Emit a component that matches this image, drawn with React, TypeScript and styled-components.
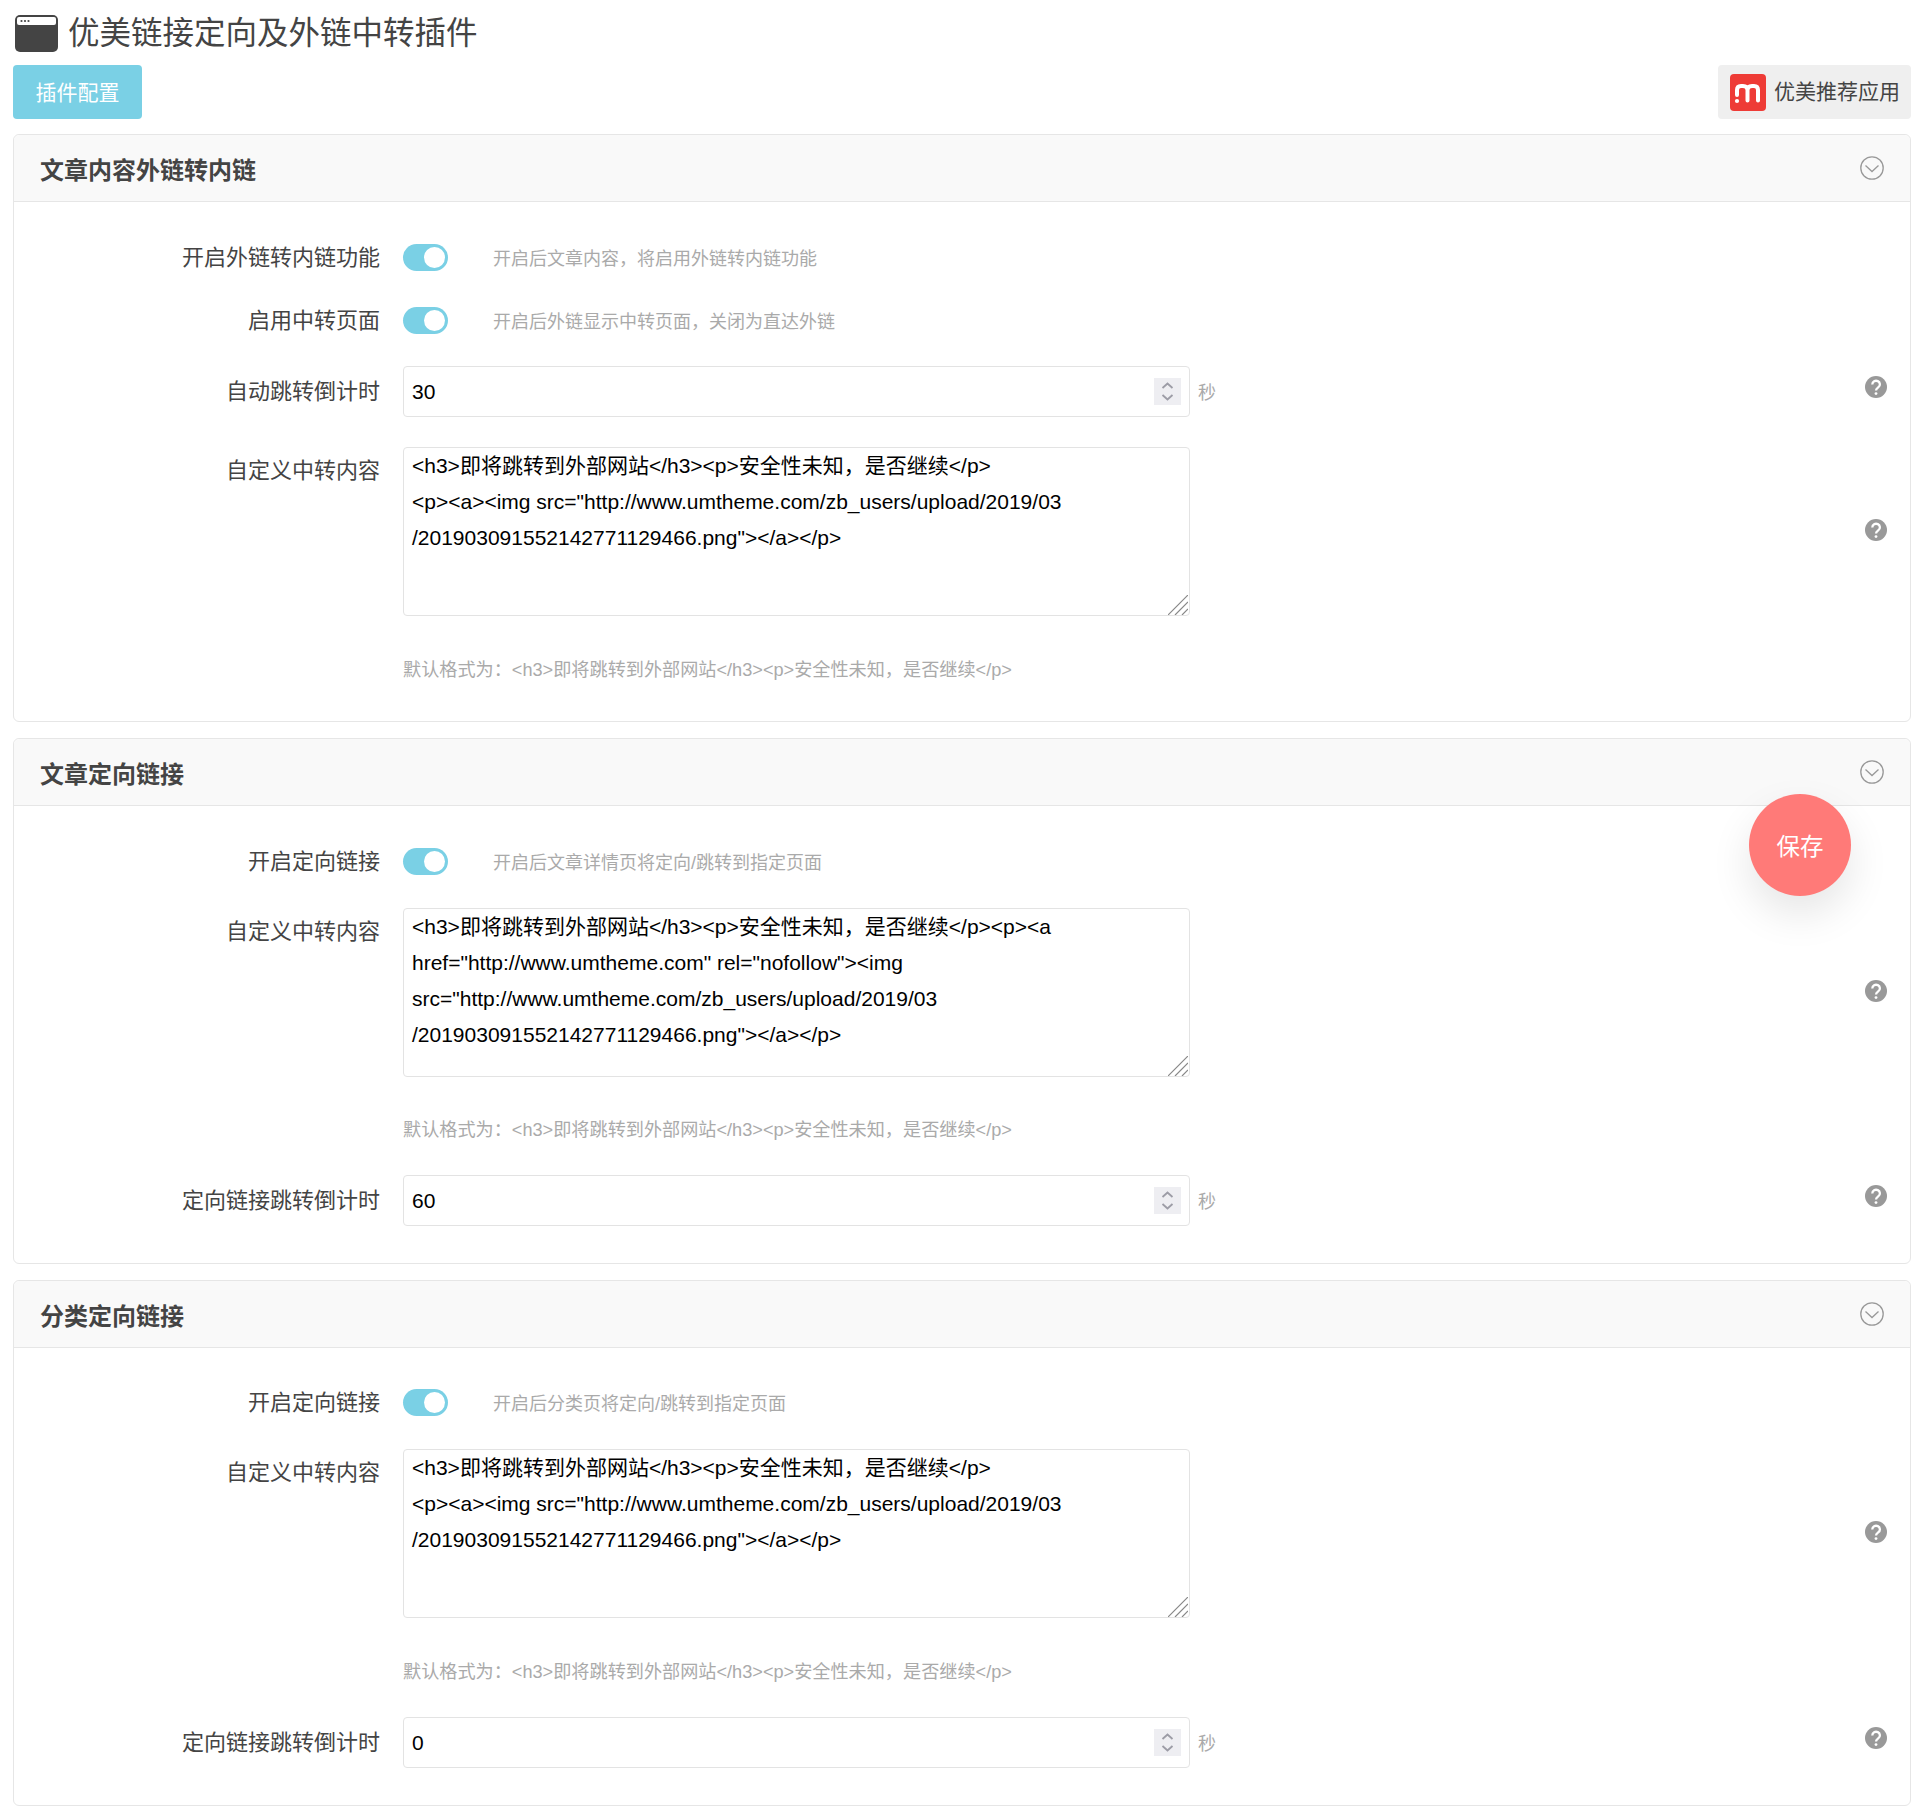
import React from 'react';
import styled, { createGlobalStyle } from 'styled-components';

const cjk = `"Liberation Sans", "Noto Sans CJK SC", sans-serif`;

const GlobalStyle = createGlobalStyle`
	html, body {
		margin: 0;
		padding: 0;
		background: #fff;
		font-family: ${cjk};
	}
	* {
		box-sizing: border-box;
	}
`;

const longValue =
	'<h3>即将跳转到外部网站</h3><p>安全性未知，是否继续</p>\n<p><a><img src="http://www.umtheme.com/zb_users/upload/2019/03\n/201903091552142771129466.png"></a></p>';
const nofollowValue =
	'<h3>即将跳转到外部网站</h3><p>安全性未知，是否继续</p><p><a\nhref="http://www.umtheme.com" rel="nofollow"><img\nsrc="http://www.umtheme.com/zb_users/upload/2019/03\n/201903091552142771129466.png"></a></p>';
const defaultHint = '默认格式为：<h3>即将跳转到外部网站</h3><p>安全性未知，是否继续</p>';

const Chevron = () => (
	<svg width="24" height="24" viewBox="0 0 24 24" fill="none" stroke="#999" strokeWidth="1.3">
		<circle cx="12" cy="12" r="11.2" />
		<path d="M5.5 9.5 L12 15.5 L18.5 9.5" />
	</svg>
);

const WindowIcon = () => (
	<svg width="43" height="37" viewBox="0 0 43 37">
		<rect width="43" height="37" rx="5" fill="#444" />
		<rect x="2" y="2" width="39" height="8" rx="2" fill="#fff" />
		<circle cx="6.5" cy="6" r="1.1" fill="#444" />
		<circle cx="10" cy="6" r="1.1" fill="#444" />
		<circle cx="13.5" cy="6" r="1.1" fill="#444" />
	</svg>
);

const LogoIcon = () => (
	<svg width="36" height="37" viewBox="0 0 36 37">
		<rect width="36" height="37" rx="4" fill="#ee3b36" />
		<path
			d="M7 21 V16 Q7 12 11 12 H13 Q17.5 12 17.5 16 V26.5 M17.5 16 Q17.5 12 22 12 H24 Q28 12 28 16 V26.5"
			fill="none"
			stroke="#fff"
			strokeWidth="4"
			strokeLinecap="round"
		/>
		<circle cx="7" cy="27" r="2.1" fill="#fff" />
	</svg>
);

const SpinnerIcon = () => (
	<svg width="27" height="27" viewBox="0 0 27 27" fill="none" stroke="#9c9ca6" strokeWidth="1.8">
		<path d="M8.5 10 L13.5 5.5 L18.5 10" />
		<path d="M8.5 17 L13.5 21.5 L18.5 17" />
	</svg>
);

const HelpIcon = () => (
	<svg width="22" height="22" viewBox="0 0 22 22">
		<circle cx="11" cy="11" r="11" fill="#999" />
		<path
			d="M7.3 8.4 a3.8 3.6 0 1 1 6 2.9 c-1.4 1 -2.3 1.6 -2.3 3.2"
			fill="none"
			stroke="#fff"
			strokeWidth="2.3"
		/>
		<circle cx="11" cy="17.6" r="1.4" fill="#fff" />
	</svg>
);

const GripIcon = () => (
	<svg width="20" height="20" viewBox="0 0 20 20" stroke="#888" strokeWidth="1.2">
		<path d="M0 20 L20 0 M7 20 L20 7 M14 20 L20 14" />
	</svg>
);

const SwitchRow = ({ top, label, hint }: { top?: number; label: string; hint: string }) => (
	<Row $top={top}>
		<Label>{label}</Label>
		<Toggle />
		<Hint>{hint}</Hint>
	</Row>
);

const NumberRow = ({ top, label, value }: { top: number; label: string; value: string }) => (
	<Row $top={top}>
		<Label>{label}</Label>
		<NumberBox>
			<NumberInput readOnly defaultValue={value} />
			<Spinner>
				<SpinnerIcon />
			</Spinner>
		</NumberBox>
		<Unit>秒</Unit>
		<Help $lift={9}>
			<HelpIcon />
		</Help>
	</Row>
);

const TextRow = ({ top, hintTop = 42, value }: { top: number; hintTop?: number; value: string }) => (
	<>
		<Row $top={top}>
			<Label $top>自定义中转内容</Label>
			<TextBox>
				<TextArea readOnly defaultValue={value} />
				<Grip>
					<GripIcon />
				</Grip>
			</TextBox>
			<Help $lift={3}>
				<HelpIcon />
			</Help>
		</Row>
		<Row $top={hintTop}>
			<DefaultHint>{defaultHint}</DefaultHint>
		</Row>
	</>
);

export default function App() {
	return (
		<Page>
			<GlobalStyle />
			<TitleRow>
				<WindowIcon />
				<Title>优美链接定向及外链中转插件</Title>
			</TitleRow>
			<Toolbar>
				<ConfigButton>插件配置</ConfigButton>
				<AppsButton>
					<LogoIcon />
					优美推荐应用
				</AppsButton>
			</Toolbar>

			<Panel>
				<PanelHeader>
					<PanelTitle>文章内容外链转内链</PanelTitle>
					<Chevron />
				</PanelHeader>
				<PanelBody $top={36} $bottom={39}>
					<SwitchRow label="开启外链转内链功能" hint="开启后文章内容，将启用外链转内链功能" />
					<SwitchRow top={23} label="启用中转页面" hint="开启后外链显示中转页面，关闭为直达外链" />
					<NumberRow top={25} label="自动跳转倒计时" value="30" />
					<TextRow top={30} value={longValue} />
				</PanelBody>
			</Panel>

			<Panel>
				<PanelHeader>
					<PanelTitle>文章定向链接</PanelTitle>
					<Chevron />
				</PanelHeader>
				<PanelBody $top={36} $bottom={37}>
					<SwitchRow label="开启定向链接" hint="开启后文章详情页将定向/跳转到指定页面" />
					<TextRow top={26} hintTop={41} value={nofollowValue} />
					<NumberRow top={33} label="定向链接跳转倒计时" value="60" />
				</PanelBody>
			</Panel>

			<Panel>
				<PanelHeader>
					<PanelTitle>分类定向链接</PanelTitle>
					<Chevron />
				</PanelHeader>
				<PanelBody $top={35} $bottom={37}>
					<SwitchRow label="开启定向链接" hint="开启后分类页将定向/跳转到指定页面" />
					<TextRow top={26} value={longValue} />
					<NumberRow top={33} label="定向链接跳转倒计时" value="0" />
				</PanelBody>
			</Panel>

			<SaveButton>保存</SaveButton>
		</Page>
	);
}

const Page = styled.div`
	position: relative;
	width: 1920px;
	padding: 15px 9px 10px 13px;
	display: flex;
	flex-direction: column;
	color: #444;
`;

const TitleRow = styled.div`
	display: flex;
	align-items: center;
	gap: 10px;
	height: 37px;
	padding-left: 2px;
`;

const Title = styled.h1`
	margin: 0;
	font-size: 31.5px;
	font-weight: 400;
	line-height: 37px;
	color: #444;
`;

const Toolbar = styled.div`
	display: flex;
	justify-content: space-between;
	margin: 13px 0 15px;
`;

const ConfigButton = styled.button`
	width: 129px;
	height: 54px;
	padding: 0 0 2px;
	border: none;
	border-radius: 4px;
	background: #7ad0e5;
	color: #fff;
	font-family: inherit;
	font-size: 21px;
`;

const AppsButton = styled.div`
	display: flex;
	align-items: center;
	gap: 8px;
	width: 193px;
	height: 54px;
	padding-left: 12px;
	border-radius: 4px;
	background: #efefef;
	color: #444;
	font-size: 21px;
	line-height: 50px;
`;

const Panel = styled.section`
	border: 1px solid #e6e6e6;
	border-radius: 6px;
	margin-bottom: 16px;
	&:last-of-type {
		margin-bottom: 0;
	}
`;

const PanelHeader = styled.header`
	display: flex;
	align-items: center;
	justify-content: space-between;
	height: 67px;
	padding: 0 26px;
	background: #f9f9f9;
	border-bottom: 1px solid #e6e6e6;
	border-radius: 6px 6px 0 0;
`;

const PanelTitle = styled.h2`
	margin: 1px 0 0;
	font-size: 24px;
	font-weight: 700;
	color: #444;
`;

const PanelBody = styled.div<{ $top: number; $bottom: number }>`
	padding: ${(p) => p.$top}px 23px ${(p) => p.$bottom}px 0;
`;

const Row = styled.div<{ $top?: number }>`
	display: flex;
	align-items: center;
	margin-top: ${(p) => p.$top ?? 0}px;
`;

const Label = styled.label<{ $top?: boolean }>`
	flex: none;
	width: 366px;
	margin-right: 23px;
	text-align: right;
	font-size: 22px;
	line-height: 40px;
	color: #444;
	align-self: ${(p) => (p.$top ? 'flex-start' : 'auto')};
	margin-top: ${(p) => (p.$top ? '4px' : '0')};
`;

const Toggle = styled.span`
	position: relative;
	flex: none;
	width: 45px;
	height: 27px;
	margin: 6px 45px 7px 0;
	border-radius: 14px;
	background: #7ad0e5;
	&::after {
		content: '';
		position: absolute;
		top: 3px;
		right: 3px;
		width: 21px;
		height: 21px;
		border-radius: 50%;
		background: #fff;
	}
`;

const Hint = styled.span`
	margin-bottom: 3px;
	font-size: 18px;
	color: #aaa;
`;

const DefaultHint = styled.div`
	margin-left: 389px;
	height: 24px;
	font-size: 18.15px;
	line-height: 24px;
	color: #aaa;
`;

const NumberBox = styled.div`
	position: relative;
	flex: none;
	width: 787px;
	height: 51px;
`;

const NumberInput = styled.input`
	display: block;
	width: 100%;
	height: 100%;
	padding: 0 8px;
	border: 1px solid #e3e3e3;
	border-radius: 4px;
	outline: none;
	color: #000;
	font-family: inherit;
	font-size: 21px;
`;

const Spinner = styled.span`
	position: absolute;
	top: 12px;
	right: 9px;
	width: 27px;
	height: 27px;
	background: #eeeef2;
	display: flex;
`;

const Unit = styled.span`
	margin-left: 8px;
	margin-bottom: 1px;
	font-size: 18px;
	color: #aaa;
`;

const TextBox = styled.div`
	position: relative;
	flex: none;
	width: 787px;
	height: 169px;
`;

const TextArea = styled.textarea`
	display: block;
	width: 100%;
	height: 100%;
	padding: 0 8px;
	border: 1px solid #e3e3e3;
	border-radius: 4px;
	outline: none;
	resize: none;
	color: #000;
	font-family: inherit;
	font-size: 21px;
	line-height: 36px;
	overflow: hidden;
	white-space: pre;
`;

const Grip = styled.span`
	position: absolute;
	right: 2px;
	bottom: 1px;
	display: flex;
`;

const Help = styled.span<{ $lift: number }>`
	display: flex;
	margin-left: auto;
	margin-bottom: ${(p) => p.$lift}px;
`;

const SaveButton = styled.button`
	position: absolute;
	top: 794px;
	left: 1749px;
	width: 102px;
	height: 102px;
	border: none;
	border-radius: 50%;
	background: #ff7a78;
	color: #fff;
	font-family: inherit;
	font-size: 23.5px;
	box-shadow: 0 18px 40px rgba(0, 0, 0, 0.1);
`;
